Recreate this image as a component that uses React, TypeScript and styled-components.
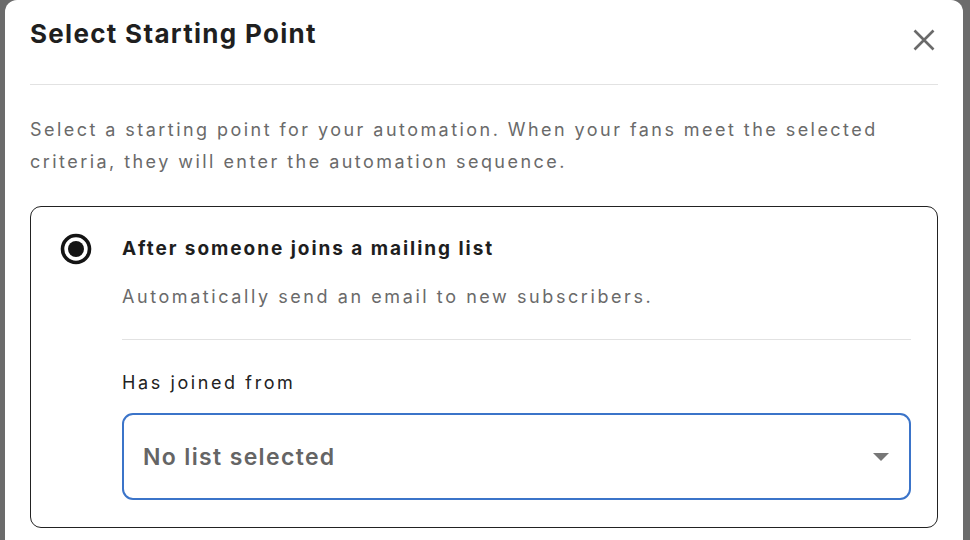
import * as React from 'react';
import styled, { createGlobalStyle } from 'styled-components';

const GlobalStyle = createGlobalStyle`
  html, body {
    margin: 0;
    padding: 0;
    background: #6b6b6b;
  }
  * { box-sizing: border-box; }
`;

const Backdrop = styled.div`
  width: 970px;
  height: 540px;
  overflow: hidden;
  padding-left: 5px;
  background: #6b6b6b;
  font-family: Inter, "Open Sans", sans-serif;
`;

const Modal = styled.div`
  width: 958px;
  height: 560px;
  background: #fff;
  border-radius: 12px 12px 0 0;
  padding: 0 25px;
`;

const Header = styled.div`
  height: 85px;
  display: flex;
  justify-content: space-between;
  align-items: flex-start;
  border-bottom: 1px solid #e2e2e2;
`;

const Title = styled.h2`
  margin: 17px 0 0;
  font-size: 26px;
  line-height: 34px;
  font-weight: 700;
  color: #1f1f1f;
  letter-spacing: 1.3px;
`;

const CloseButton = styled.button`
  border: 0;
  background: none;
  padding: 0;
  margin: 29px 3px 0 0;
  width: 22px;
  height: 22px;
  cursor: pointer;
  color: #6a6a6a;
`;

const Intro = styled.p`
  margin: 29px 0 28px;
  font-size: 18px;
  line-height: 32px;
  color: #6a6a6a;
  letter-spacing: 2.45px;
`;

const Card = styled.div`
  border: 1px solid #222;
  border-radius: 11px;
  padding: 28px 26px 27px 29px;
  display: grid;
  grid-template-columns: 32px 1fr;
  column-gap: 30px;
`;

const Radio = styled.div`
  width: 32px;
  height: 32px;
  margin-top: -2px;
  display: flex;
`;

const Body = styled.div`
  display: flex;
  flex-direction: column;
`;

const OptionTitle = styled.div`
  font-size: 19px;
  line-height: 28px;
  font-weight: 700;
  color: #1e1e1e;
  letter-spacing: 1.95px;
`;

const OptionText = styled.div`
  margin-top: 20px;
  font-size: 18px;
  line-height: 28px;
  color: #6a6a6a;
  letter-spacing: 2.57px;
`;

const Rule = styled.hr`
  border: 0;
  border-top: 1px solid #e2e2e2;
  margin: 28px 0 0;
`;

const FieldLabel = styled.label`
  margin-top: 29px;
  font-size: 18px;
  line-height: 28px;
  color: #222;
  letter-spacing: 2.6px;
`;

const Select = styled.div<{ $focused?: boolean }>`
  margin-top: 16px;
  height: 87px;
  border: 2.5px solid ${(p) => (p.$focused ? '#3b74c9' : '#bbb')};
  border-radius: 11px;
  display: flex;
  align-items: center;
  justify-content: space-between;
  padding: 0 20px 0 19px;
`;

const SelectValue = styled.span`
  font-size: 23px;
  font-weight: 600;
  color: #656565;
  letter-spacing: 1.35px;
`;

const Caret = () => (
  <svg width="16" height="8" viewBox="0 0 16 8">
    <path d="M0 0 H16 L8 8 Z" fill="#777" />
  </svg>
);

export default function App() {
  return (
    <Backdrop>
      <GlobalStyle />
      <Modal>
        <Header>
          <Title>Select Starting Point</Title>
          <CloseButton aria-label="Close">
            <svg width="22" height="22" viewBox="0 0 22 22">
              <path d="M1.5 1.5 L20.5 20.5 M20.5 1.5 L1.5 20.5" stroke="currentColor" strokeWidth="2.6" />
            </svg>
          </CloseButton>
        </Header>
        <Intro>
          Select a starting point for your automation. When your fans meet the selected criteria, they will enter
          the automation sequence.
        </Intro>
        <Card>
          <Radio>
            <svg width="32" height="32" viewBox="0 0 32 32">
              <circle cx="16" cy="16" r="13.5" fill="none" stroke="#141414" strokeWidth="3.6" />
              <circle cx="16" cy="16" r="8" fill="#141414" />
            </svg>
          </Radio>
          <Body>
            <OptionTitle>After someone joins a mailing list</OptionTitle>
            <OptionText>Automatically send an email to new subscribers.</OptionText>
            <Rule />
            <FieldLabel>Has joined from</FieldLabel>
            <Select $focused>
              <SelectValue>No list selected</SelectValue>
              <Caret />
            </Select>
          </Body>
        </Card>
      </Modal>
    </Backdrop>
  );
}
